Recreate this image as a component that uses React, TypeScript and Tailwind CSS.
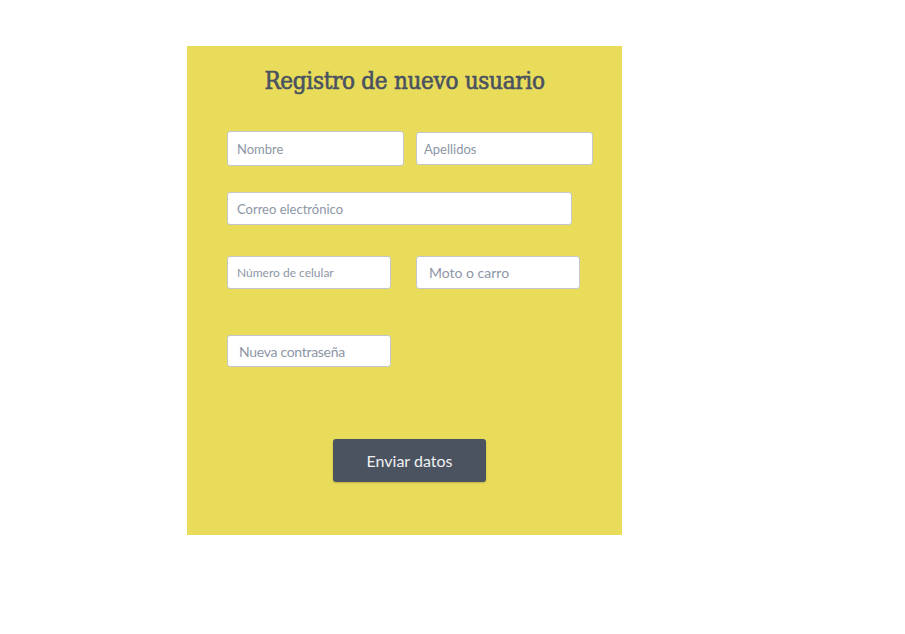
export default function App() {
  const inputBase =
    "block bg-white border border-[#c3c7cc] rounded-[3px] text-[#4a5361] placeholder:text-[#8d96a5] outline-none font-['Lato',sans-serif]";

  return (
    <div className="min-h-[634px] w-full bg-white pt-[46px] pl-[187px]">
      <div className="w-[435px] h-[489px] bg-[#e9dc5b] flex flex-col">
        {/* Title */}
        <h1 className="mt-[20px] text-center text-[24px] leading-[30px] tracking-[-0.3px] text-[#4a5260] font-['DejaVu_Serif',serif] font-stretch-condensed [-webkit-text-stroke:0.6px_#4a5260]">
          Registro de nuevo usuario
        </h1>

        <div className="pl-[40px] flex flex-col">
          {/* Nombre / Apellidos */}
          <div className="mt-[35px] flex items-start gap-[12px]">
            <input
              type="text"
              placeholder="Nombre"
              className={`${inputBase} w-[177px] h-[35px] pl-[9px] text-[13px]`}
            />
            <input
              type="text"
              placeholder="Apellidos"
              className={`${inputBase} mt-[1px] w-[177px] h-[33px] pl-[7px] text-[13px]`}
            />
          </div>

          {/* Correo */}
          <input
            type="email"
            placeholder="Correo electrónico"
            className={`${inputBase} mt-[26px] w-[345px] h-[33px] pl-[9px] text-[13px]`}
          />

          {/* Celular / Moto */}
          <div className="mt-[31px] flex items-start gap-[25px]">
            <input
              type="tel"
              placeholder="Número de celular"
              className={`${inputBase} w-[164px] h-[33px] pl-[9px] text-[12px]`}
            />
            <input
              type="text"
              placeholder="Moto o carro"
              className={`${inputBase} w-[164px] h-[33px] pl-[12px] text-[14px]`}
            />
          </div>

          {/* Contraseña */}
          <input
            type="password"
            placeholder="Nueva contraseña"
            className={`${inputBase} mt-[46px] w-[164px] h-[32px] pl-[11px] text-[14px] tracking-[-0.3px]`}
          />
        </div>

        {/* Submit */}
        <div className="pl-[146px] mt-[72px]">
          <button
            type="button"
            className="w-[153px] h-[43px] rounded-[3px] bg-[#4b5361] text-[#f0f1f2] text-[16px] font-['Lato',sans-serif] shadow-[0_1px_2px_rgba(0,0,0,0.2)]"
          >
            Enviar datos
          </button>
        </div>
      </div>
    </div>
  );
}
